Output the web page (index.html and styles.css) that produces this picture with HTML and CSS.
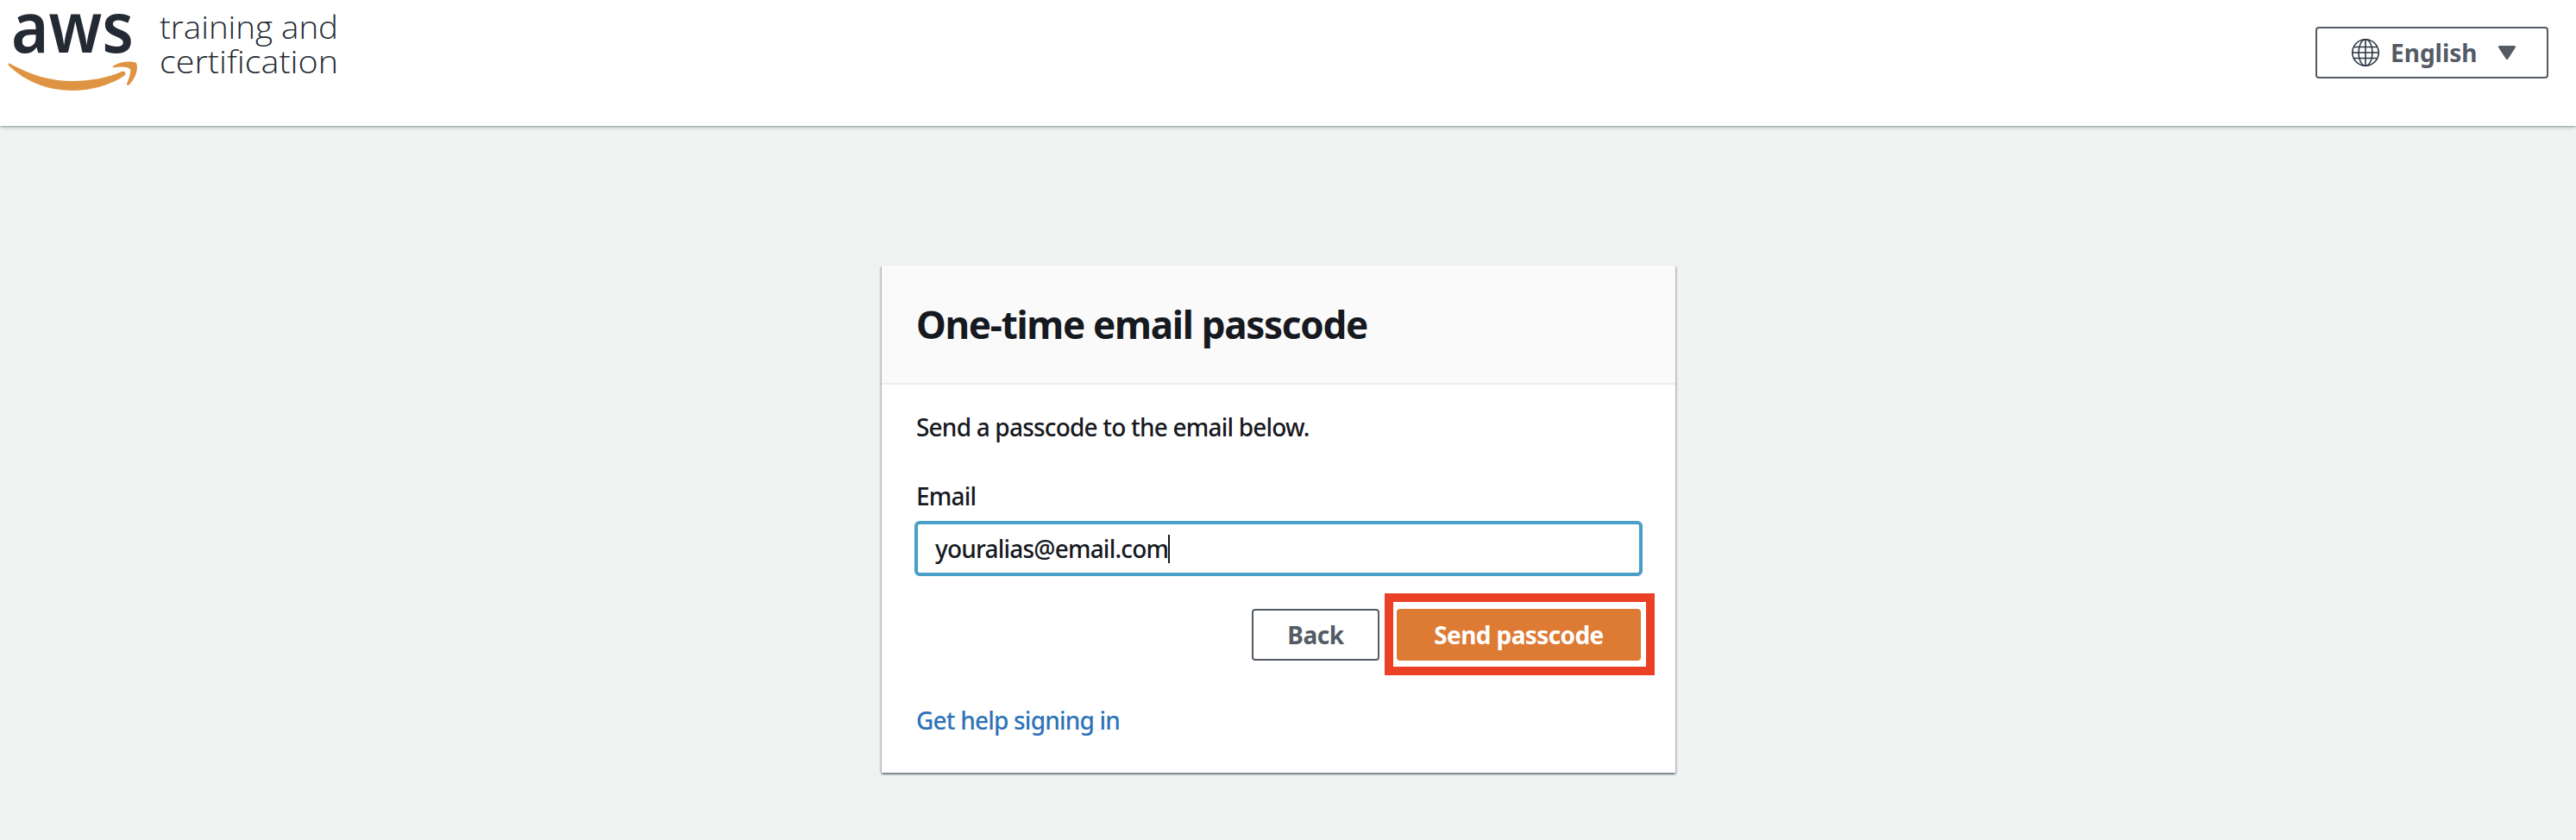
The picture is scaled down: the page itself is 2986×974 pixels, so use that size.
FILE: index.html
```html
<!DOCTYPE html>
<html lang="en">
<head>
<meta charset="utf-8">
<title>One-time email passcode</title>
<link rel="stylesheet" href="styles.css">
</head>
<body>
<header class="topbar">
  <svg class="logo" width="400" height="120" viewBox="0 0 400 120" role="img" aria-label="AWS training and certification">
    <text class="logo-aws" x="13" y="61" textLength="142" lengthAdjust="spacingAndGlyphs">aws</text>
    <path fill="#df9443" d="M12 74C35 87 59 94 84 94C105 94 125 90 141 83C145 82 147 85 144 88C127 99 105 105 84 105C54 105 29 94 10 76C9 74 10 73 12 74Z"/>
    <path fill="#df9443" d="M131 77C139 70 156 71 158 73C161 79 157 92 149 99C147 99 147 98 147 97C150 90 152 83 151 80C148 77 140 77 133 78C131 79 130 78 131 77Z"/>
    <text class="logo-tag" x="185" y="45" textLength="207" lengthAdjust="spacingAndGlyphs">training and</text>
    <text class="logo-tag" x="185" y="85" textLength="207" lengthAdjust="spacingAndGlyphs">certification</text>
  </svg>
  <button class="btn language" type="button">
    <svg class="globe" width="32" height="32" viewBox="0 0 32 32" fill="none" stroke="#2b3644" stroke-width="1.6">
      <circle cx="16" cy="16" r="15.2"/>
      <ellipse cx="16" cy="16" rx="8" ry="15.2"/>
      <path d="M16 1V31M1 16H31M3 9.5H29M3 22.5H29"/>
    </svg>
    <span class="language-name">English</span>
    <svg class="caret-down" width="20" height="16" viewBox="0 0 20 16"><path d="M1.5 1.5H18.5L10 14.5Z" fill="#545b64" stroke="#545b64" stroke-width="3" stroke-linejoin="round"/></svg>
  </button>
</header>
<main class="page">
  <section class="card">
    <div class="card-header"><h1 class="title">One-time email passcode</h1></div>
    <div class="card-body">
      <p class="intro"><span class="intro-text">Send a passcode to the email below.</span></p>
      <label class="label">Email</label>
      <div class="field"><span class="value">youralias@email.com</span><span class="cursor"></span></div>
      <div class="actions">
        <button class="btn back" type="button"><span class="back-text">Back</span></button>
        <button class="btn send" type="button"><span class="send-text">Send passcode</span></button>
      </div>
      <a class="help">Get help signing in</a>
    </div>
  </section>
</main>
</body>
</html>
```
FILE: styles.css
```css
* { box-sizing: border-box; }
body {
  margin: 0;
  min-height: 974px;
  background: #f1f3f3;
  color: #16191f;
  font-family: "Noto Sans", "Open Sans", sans-serif;
  font-size: 28px;
  font-weight: 500;
  line-height: 40px;
}
.topbar {
  position: relative;
  display: flex;
  justify-content: space-between;
  align-items: flex-start;
  height: 146px;
  padding-right: 32px;
  background: #fff;
  box-shadow: 0 1px 2px rgba(0, 28, 36, .35), 0 2px 6px rgba(0, 28, 36, .15);
}
.logo { display: block; }
.logo-aws { font-size: 82px; font-weight: 600; fill: #232a33; }
.logo-tag { font-family: "Open Sans", sans-serif; font-size: 37px; font-weight: 300; fill: #232a33; }
.btn {
  display: flex;
  align-items: center;
  justify-content: center;
  height: 60px;
  padding: 0;
  border: 2px solid #545b64;
  border-radius: 4px;
  background: #fff;
  color: #545b64;
  font: bold 28px/40px "Noto Sans", "Open Sans", sans-serif;
  white-space: nowrap;
}
.language {
  justify-content: flex-start;
  width: 270px;
  margin-top: 31px;
  padding-left: 40px;
}
.language-name { width: 125px; margin-left: 13px; text-align: left; letter-spacing: 0; }
.page { display: flex; padding: 162px 0 0 1022px; }
.card {
  width: 920px;
  height: 588px;
  background: #fff;
  box-shadow: 0 -1px 0 #e9edec, 0 2px 2px rgba(0, 28, 36, .45), 2px 1px 2px rgba(0, 28, 36, .15), -2px 1px 2px rgba(0, 28, 36, .15);
}
.card-header {
  display: flex;
  align-items: center;
  height: 138px;
  padding-left: 40px;
  background: #fafafa;
  border-bottom: 2px solid #eaeded;
}
.title { margin: 0; font-size: 44px; line-height: 56px; letter-spacing: -1.28px; white-space: nowrap; }
.card-body { display: flex; flex-direction: column; padding: 29px 38px 0; }
.intro { margin: 0 0 40px 2px; letter-spacing: -.8px; }
.label { margin: 0 0 9px 2px; letter-spacing: -.8px; }
.field {
  display: flex;
  align-items: center;
  height: 64px;
  padding-left: 20px;
  border: 4px solid #499fc7;
  border-radius: 6px;
}
.value { letter-spacing: -.8px; }
.cursor { width: 2px; height: 33px; background: #16191f; }
.actions {
  display: flex;
  justify-content: flex-end;
  gap: 20px;
  margin: 38px 2px 49px 0;
}
.back { width: 148px; letter-spacing: -.4px; }
.send {
  width: 283px;
  border-color: #dd7a34;
  background: #dd7a34;
  color: #fff;
  letter-spacing: -.6px;
  position: relative;
}
.send::after {
  content: "";
  position: absolute;
  top: -20px;
  right: -18px;
  bottom: -19px;
  left: -16px;
  border: 10px solid #ea4126;
}
.help { align-self: flex-start; margin-left: 2px; color: #2e73b8; letter-spacing: -.8px; }
```
